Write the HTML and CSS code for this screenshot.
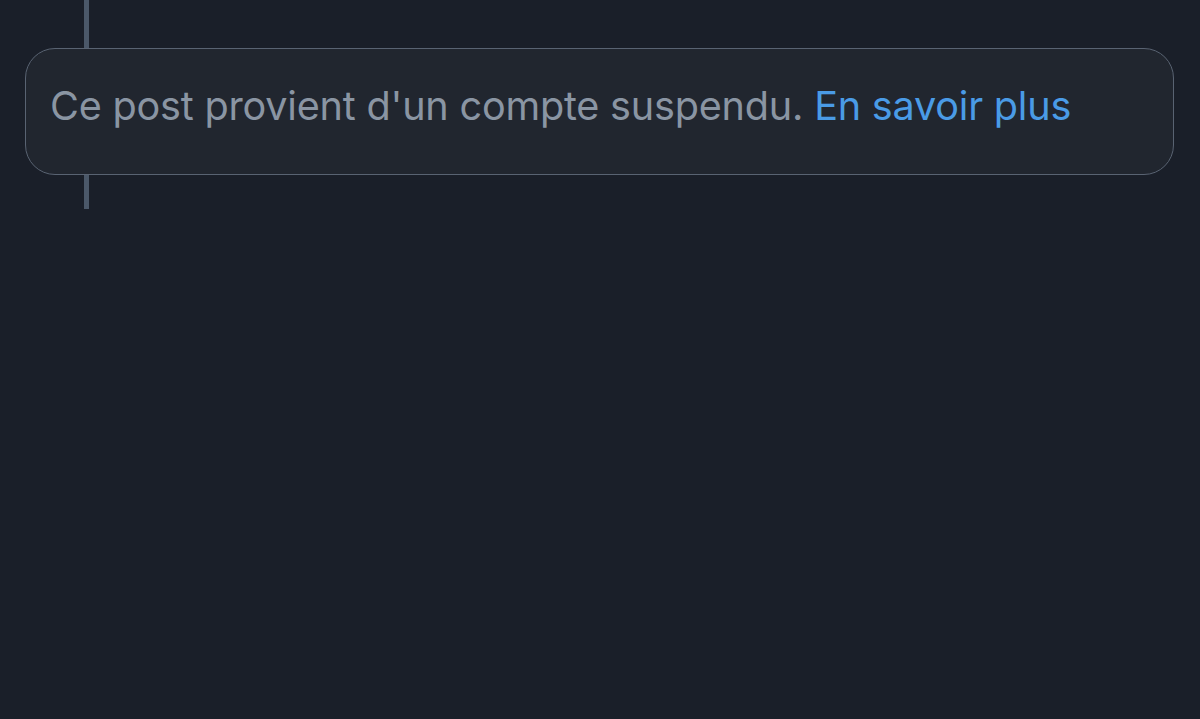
FILE: index.html
```html
<!DOCTYPE html>
<html lang="fr">
<head>
<meta charset="utf-8">
<link rel="stylesheet" href="styles.css">
</head>
<body>
<div class="thread">
  <div class="line-top"></div>
  <div class="notice">
    <p class="notice-text">Ce post provient d'un compte suspendu. <a class="link" href="#">En savoir plus</a></p>
  </div>
  <div class="line-bottom"></div>
</div>
</body>
</html>
```
FILE: styles.css
```css
html, body {
  margin: 0;
  padding: 0;
  background: #1a1f29;
  width: 1200px;
  height: 719px;
  overflow: hidden;
}
.thread {
  display: flex;
  flex-direction: column;
  padding: 0 26px 0 25px;
}
.line-top, .line-bottom {
  width: 5px;
  margin-left: 59px;
  background: #4b5869;
}
.line-top { height: 48px; }
.line-bottom { height: 34px; }
.notice {
  box-sizing: border-box;
  height: 127px;
  border: 1px solid #596372;
  border-radius: 30px;
  background: #21262f;
  display: flex;
  align-items: center;
  padding: 0 0 12px 24px;
}
.notice-text {
  margin: 0;
  font-family: Inter, "Noto Sans", sans-serif;
  font-size: 39.6px;
  color: #8a95a3;
  letter-spacing: -0.2px;
}
.link {
  color: #4a9be6;
  text-decoration: none;
}
```
